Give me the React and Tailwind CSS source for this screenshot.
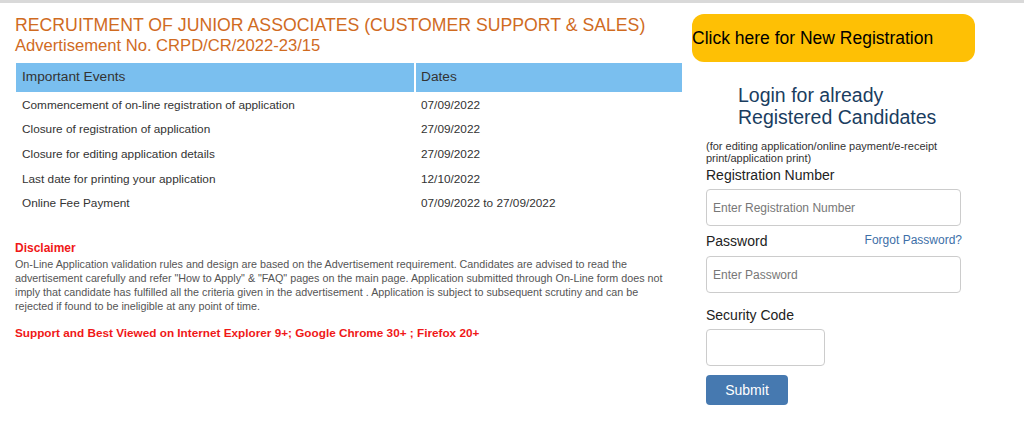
const events = [
  { label: "Commencement of on-line registration of application", date: "07/09/2022" },
  { label: "Closure of registration of application", date: "27/09/2022" },
  { label: "Closure for editing application details", date: "27/09/2022" },
  { label: "Last date for printing your application", date: "12/10/2022" },
  { label: "Online Fee Payment", date: "07/09/2022 to 27/09/2022" },
];

const App = () => {
  return (
    <div className="min-h-[433px] bg-white font-['Liberation_Sans',Arial,sans-serif]">
      <div className="h-[3px] bg-[#d9d9d9]" />

      <div className="flex">
        {/* Left column */}
        <div className="ml-[15px] w-[668px] pt-[12px]">
          <h1 className="text-[17.7px] leading-[20px] text-[#d06b1f]">
            RECRUITMENT OF JUNIOR ASSOCIATES (CUSTOMER SUPPORT &amp; SALES)
            <br />
            <span className="text-[16.6px]">Advertisement No. CRPD/CR/2022-23/15</span>
          </h1>

          <table className="mt-[7px] ml-px w-[666px] border-collapse text-[#333]">
            <thead>
              <tr className="bg-[#7abfef] h-[29px]">
                <th className="w-[399px] border-r-2 border-white px-[6px] text-left text-[13.7px] font-normal">
                  Important Events
                </th>
                <th className="px-[5px] text-left text-[13.7px] font-normal">Dates</th>
              </tr>
            </thead>
            <tbody>
              {events.map((e, i) => (
                <tr key={e.label} className={i === 0 ? "h-[26px] align-bottom" : "h-[24.6px]"}>
                  <td className={i === 0 ? "px-[6px] pb-[3px] text-[11.8px]" : "px-[6px] text-[11.8px]"}>{e.label}</td>
                  <td className={i === 0 ? "px-[6px] pb-[3px] text-[11.8px]" : "px-[6px] text-[11.8px]"}>{e.date}</td>
                </tr>
              ))}
            </tbody>
          </table>

          <div className="mt-[25px]">
            <div className="text-[12px] leading-[14px] font-bold text-[#f01818]">Disclaimer</div>
            <p className="mt-[2px] w-[652px] text-[10.75px] leading-[14px] text-[#555]">
              On-Line Application validation rules and design are based on the Advertisement requirement. Candidates are advised to read the advertisement carefully and refer "How to Apply" &amp; "FAQ" pages on the main page. Application submitted through On-Line form does not imply that candidate has fulfilled all the criteria given in the advertisement . Application is subject to subsequent scrutiny and can be rejected if found to be ineligible at any point of time.
            </p>
            <p className="mt-[11px] text-[11.75px] font-bold text-[#f01818]">
              Support and Best Viewed on Internet Explorer 9+; Google Chrome 30+ ; Firefox 20+
            </p>
          </div>
        </div>

        {/* Right column */}
        <div className="ml-[9px] w-[300px] pt-[11px]">
          <button className="flex h-[48px] w-[283px] items-center rounded-[12px] bg-[#fec005] pt-px text-left text-[17.5px] text-black">
            Click here for New Registration
          </button>

          <div className="mt-[22px] ml-[46px] text-[19.5px] leading-[22px] text-[#1a3d5f]">
            Login for already
            <br />
            Registered Candidates
          </div>

          <div className="ml-[14px] mt-[12px] w-[270px] text-[11px] leading-[12px] text-[#333]">
            (for editing application/online payment/e-receipt print/application print)
          </div>

          <div className="ml-[14px] w-[256px]">
            <label className="mt-[3px] block text-[14px] leading-[17px] text-[#222]">Registration Number</label>
            <input
              className="mt-[5px] h-[37px] w-[255px] rounded-[4px] border border-[#ccc] px-[6px] text-[12px] placeholder:text-[#777]"
              placeholder="Enter Registration Number"
            />

            <div className="mt-[7px] flex items-end justify-between">
              <label className="text-[14px] leading-[17px] text-[#222]">Password</label>
              <a className="mb-[3px] text-[12px] leading-[14px] text-[#3d6fa8]">Forgot Password?</a>
            </div>
            <input
              type="password"
              className="mt-[6px] h-[37px] w-[255px] rounded-[4px] border border-[#ccc] px-[6px] text-[12px] placeholder:text-[#777]"
              placeholder="Enter Password"
            />

            <label className="mt-[14px] block text-[14px] leading-[17px] text-[#222]">Security Code</label>
            <input className="mt-[5px] h-[37px] w-[119px] rounded-[4px] border border-[#ccc] px-[6px] text-[12px]" />

            <button className="mt-[9px] block h-[30px] w-[82px] rounded-[4px] bg-[#4679b0] text-[14px] text-white">
              Submit
            </button>
          </div>
        </div>
      </div>
    </div>
  );
};

export default App;
